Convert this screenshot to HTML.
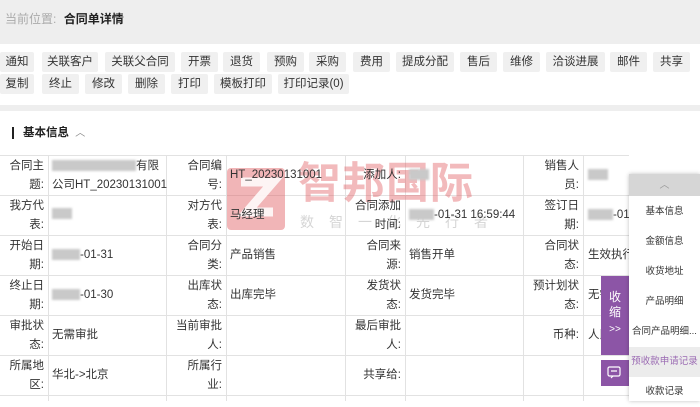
<!DOCTYPE html>
<html><head><meta charset="utf-8"><style>
*{margin:0;padding:0;box-sizing:border-box}
body{width:700px;height:401px;overflow:hidden;background:#fff;font-family:"Liberation Sans","Noto Sans CJK SC",sans-serif;font-size:11.5px;color:#333;position:relative}
.a{position:absolute}
.hd{left:0;top:0;width:700px;height:44px;background:#eeeeee}
.b{position:absolute;height:20px;line-height:20px;background:#f0f0f0;border-radius:2px;text-align:center;font-size:11.5px;color:#333}
.band{left:0;top:105px;width:700px;height:6px;background:#eeeeee}
.hl{position:absolute;height:1px;background:#e2e2e2;left:0;width:629px}
.vl{position:absolute;width:1px;background:#e2e2e2;top:155px;height:246px}
.lb{position:absolute;text-align:right;line-height:19px;font-size:11.5px;color:#333}
.v{position:absolute;line-height:19px;font-size:11.5px;color:#333;white-space:nowrap}
.blur{display:inline-block;background:#c9c9c9;height:11px;vertical-align:middle;filter:blur(1px)}
.side{left:629px;top:174px;width:71px;height:227px;background:#fff;box-shadow:0 0 4px rgba(0,0,0,.25)}
.si{position:absolute;left:0;width:71px;text-align:center;font-size:9.5px;color:#333;height:30px;line-height:30px}
</style></head><body>
<div class="a hd"></div>
<div class="a" style="left:5px;top:11px;font-size:12px;line-height:16px"><span style="color:#aaa">当前位置:</span> <b style="color:#222;margin-left:4px">合同单详情</b></div>

<div class="b" style="left:0;top:52px;width:34px">通知</div>
<div class="b" style="left:42px;top:52px;width:56px">关联客户</div>
<div class="b" style="left:105px;top:52px;width:70px">关联父合同</div>
<div class="b" style="left:181px;top:52px;width:37px">开票</div>
<div class="b" style="left:223px;top:52px;width:37px">退货</div>
<div class="b" style="left:267px;top:52px;width:37px">预购</div>
<div class="b" style="left:309px;top:52px;width:37px">采购</div>
<div class="b" style="left:353px;top:52px;width:37px">费用</div>
<div class="b" style="left:396px;top:52px;width:58px">提成分配</div>
<div class="b" style="left:460px;top:52px;width:37px">售后</div>
<div class="b" style="left:503px;top:52px;width:37px">维修</div>
<div class="b" style="left:546px;top:52px;width:59px">洽谈进展</div>
<div class="b" style="left:610px;top:52px;width:37px">邮件</div>
<div class="b" style="left:653px;top:52px;width:37px">共享</div>

<div class="b" style="left:0;top:74px;width:34px">复制</div>
<div class="b" style="left:42px;top:74px;width:37px">终止</div>
<div class="b" style="left:85px;top:74px;width:37px">修改</div>
<div class="b" style="left:128px;top:74px;width:37px">删除</div>
<div class="b" style="left:171px;top:74px;width:37px">打印</div>
<div class="b" style="left:214px;top:74px;width:58px">模板打印</div>
<div class="b" style="left:278px;top:74px;width:71px">打印记录(0)</div>

<div class="a band"></div>
<div class="a" style="left:12px;top:127px;width:2px;height:12px;background:#222"></div>
<div class="a" style="left:23px;top:125px;font-size:11.5px;font-weight:bold;color:#222;line-height:16px">基本信息 <span style="font-weight:normal;color:#888;font-size:10px;margin-left:3px">︿</span></div>

<div class="hl" style="top:155px"></div>
<div class="hl" style="top:195px"></div>
<div class="hl" style="top:235px"></div>
<div class="hl" style="top:275px"></div>
<div class="hl" style="top:315px"></div>
<div class="hl" style="top:355px"></div>
<div class="hl" style="top:395px"></div>
<div class="vl" style="left:48px"></div>
<div class="vl" style="left:166px"></div>
<div class="vl" style="left:226px"></div>
<div class="vl" style="left:345px"></div>
<div class="vl" style="left:405px"></div>
<div class="vl" style="left:523px"></div>
<div class="vl" style="left:583px"></div>

<div class="a" style="left:227px;top:168px;width:58px;height:62px;background:rgba(225,90,95,.45);border-radius:4px"></div>
<svg class="a" style="left:227px;top:168px" width="58" height="62"><path d="M14 14H46L20 44H46" stroke="#fff" stroke-width="9" fill="none" stroke-opacity=".85"/></svg>
<div class="a" style="left:298px;top:160px;font-size:43px;line-height:48px;color:rgba(225,90,95,.42);font-weight:bold;letter-spacing:1px">智邦国际</div>
<div class="a" style="left:300px;top:214px;font-size:14px;line-height:16px;color:rgba(150,150,150,.4);letter-spacing:15px">数智一化先行者</div>

<div class="lb" style="left:0;top:157px;width:44px">合同主<br>题:</div>
<div class="v" style="left:52px;top:157px"><span class="blur" style="width:84px"></span>有限<br>公司HT_20230131001</div>
<div class="lb" style="left:166px;top:157px;width:56px">合同编<br>号:</div>
<div class="v" style="left:230px;top:166px">HT_20230131001</div>
<div class="lb" style="left:345px;top:166px;width:56px">添加人:</div>
<div class="v" style="left:409px;top:166px"><span class="blur" style="width:20px"></span></div>
<div class="lb" style="left:523px;top:157px;width:56px">销售人<br>员:</div>
<div class="v" style="left:588px;top:166px"><span class="blur" style="width:20px"></span></div>
<div class="lb" style="left:0;top:197px;width:44px">我方代<br>表:</div>
<div class="v" style="left:52px;top:205px"><span class="blur" style="width:20px"></span></div>
<div class="lb" style="left:166px;top:197px;width:56px">对方代<br>表:</div>
<div class="v" style="left:230px;top:206px">马经理</div>
<div class="lb" style="left:345px;top:197px;width:56px">合同添加<br>时间:</div>
<div class="v" style="left:409px;top:206px"><span class="blur" style="width:25px"></span>-01-31 16:59:44</div>
<div class="lb" style="left:523px;top:197px;width:56px">签订日<br>期:</div>
<div class="v" style="left:588px;top:206px"><span class="blur" style="width:25px"></span>-01</div>
<div class="lb" style="left:0;top:237px;width:44px">开始日<br>期:</div>
<div class="v" style="left:52px;top:246px"><span class="blur" style="width:28px"></span>-01-31</div>
<div class="lb" style="left:166px;top:237px;width:56px">合同分<br>类:</div>
<div class="v" style="left:230px;top:246px">产品销售</div>
<div class="lb" style="left:345px;top:237px;width:56px">合同来<br>源:</div>
<div class="v" style="left:409px;top:246px">销售开单</div>
<div class="lb" style="left:523px;top:237px;width:56px">合同状<br>态:</div>
<div class="v" style="left:588px;top:246px">生效执行</div>
<div class="lb" style="left:0;top:277px;width:44px">终止日<br>期:</div>
<div class="v" style="left:52px;top:286px"><span class="blur" style="width:28px"></span>-01-30</div>
<div class="lb" style="left:166px;top:277px;width:56px">出库状<br>态:</div>
<div class="v" style="left:230px;top:286px">出库完毕</div>
<div class="lb" style="left:345px;top:277px;width:56px">发货状<br>态:</div>
<div class="v" style="left:409px;top:286px">发货完毕</div>
<div class="lb" style="left:523px;top:277px;width:56px">预计划状<br>态:</div>
<div class="v" style="left:588px;top:286px">无需</div>
<div class="lb" style="left:0;top:317px;width:44px">审批状<br>态:</div>
<div class="v" style="left:52px;top:326px">无需审批</div>
<div class="lb" style="left:166px;top:317px;width:56px">当前审批<br>人:</div>
<div class="lb" style="left:345px;top:317px;width:56px">最后审批<br>人:</div>
<div class="lb" style="left:523px;top:326px;width:56px">币种:</div>
<div class="v" style="left:588px;top:326px">人民</div>
<div class="lb" style="left:0;top:357px;width:44px">所属地<br>区:</div>
<div class="v" style="left:52px;top:366px">华北-&gt;北京</div>
<div class="lb" style="left:166px;top:357px;width:56px">所属行<br>业:</div>
<div class="lb" style="left:345px;top:366px;width:56px">共享给:</div>

<div class="a" style="left:601px;top:276px;width:28px;height:79px;background:#8c55a6;color:#fff;text-align:center;font-size:12px;line-height:15px;padding-top:14px">收<br>缩<br><span style="font-size:10px;line-height:20px">&gt;&gt;</span></div>
<div class="a" style="left:601px;top:360px;width:28px;height:26px;background:#8c55a6"></div>
<svg class="a" style="left:606px;top:365px" width="18" height="16"><rect x="2" y="2" width="12" height="9" rx="1.5" fill="none" stroke="#fff" stroke-width="1.2"/><path d="M5 6h6M5 13l2-2" stroke="#fff" stroke-width="1.2"/></svg>

<div class="a side">
<div class="a" style="left:0;top:0;width:71px;height:22px;background:#d6d6d6;text-align:center;color:#999;font-size:10px;line-height:24px">︿</div>
<div class="si" style="top:23px">基本信息</div>
<div class="si" style="top:53px">金额信息</div>
<div class="si" style="top:83px">收货地址</div>
<div class="si" style="top:113px">产品明细</div>
<div class="si" style="top:143px;text-align:left;padding-left:3px">合同产品明细...</div>
<div class="si" style="top:173px;background:#ececec;color:#9b6bb3">预收款申请记录</div>
<div class="si" style="top:203px">收款记录</div>
</div>
</body></html>
